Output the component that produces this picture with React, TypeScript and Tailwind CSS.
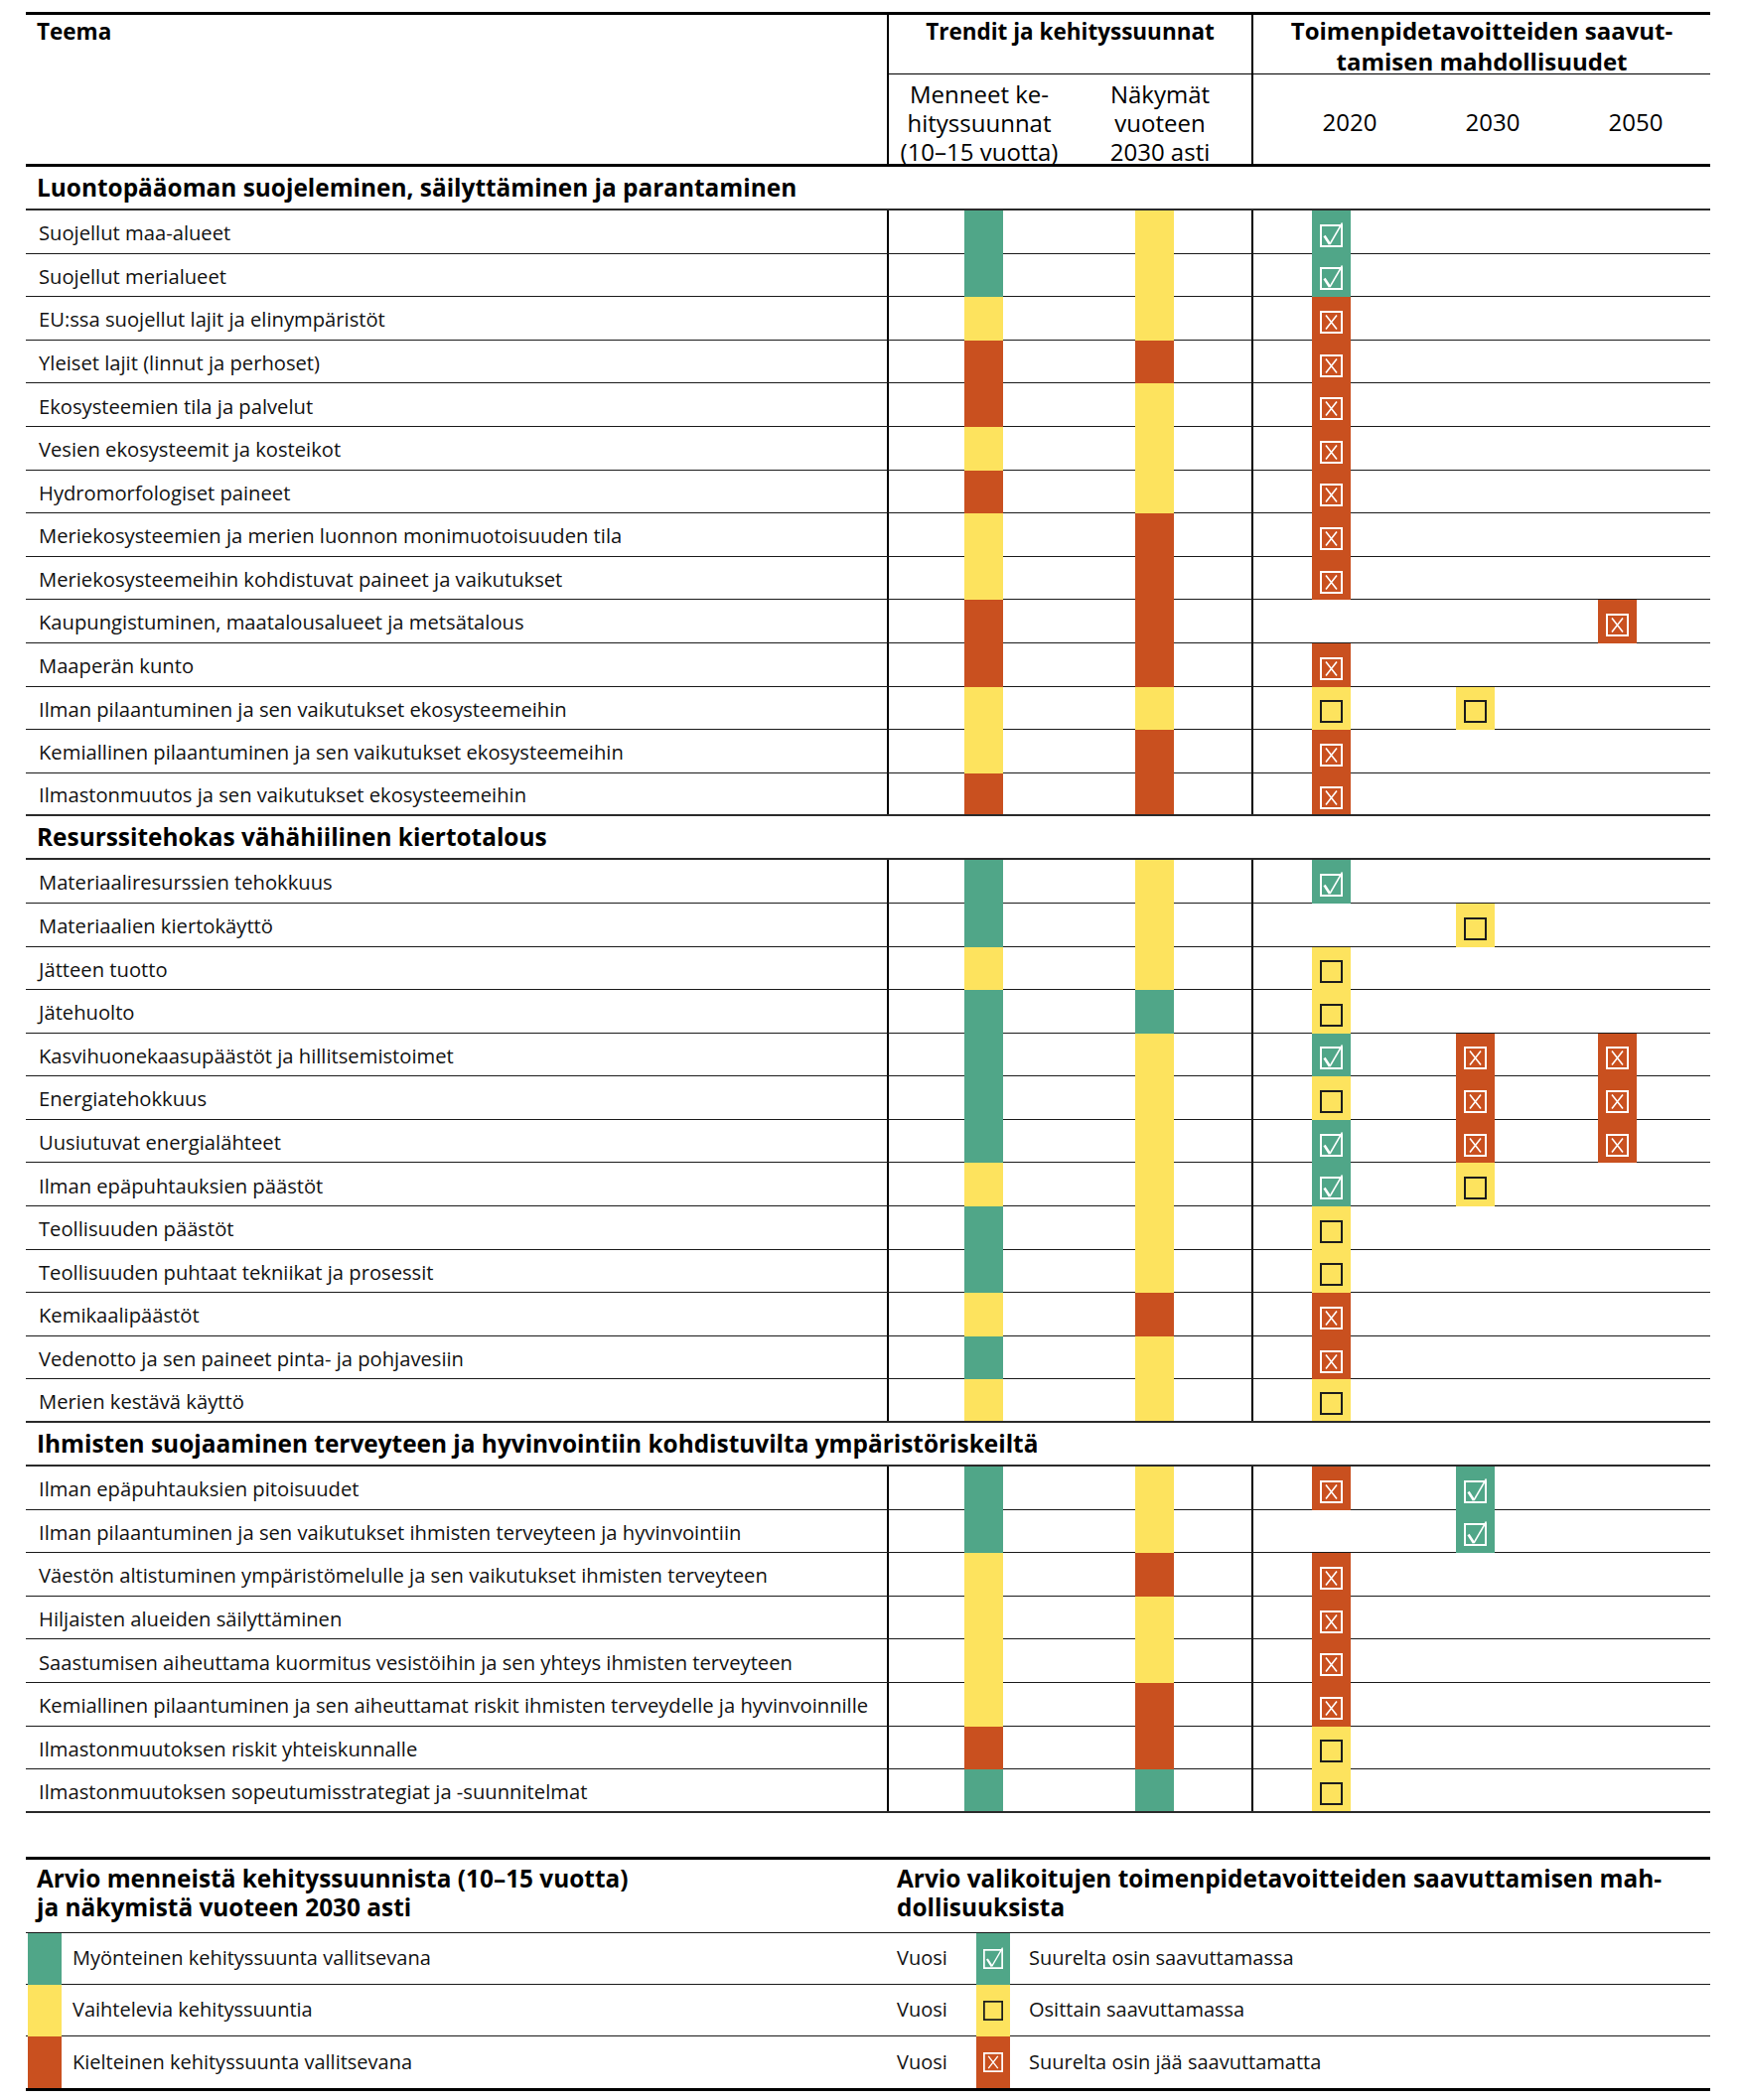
type Trend = 'G' | 'Y' | 'R';
type Goal = 'c' | 'b' | 'x' | '';

interface Theme {
  label: string;
  past: Trend;
  outlook: Trend;
  goals: [Goal, Goal, Goal];
}

interface Section {
  title: string;
  rows: Theme[];
}

const TREND_BG: Record<Trend, string> = {
  G: 'bg-[#50a688]',
  Y: 'bg-[#fde35e]',
  R: 'bg-[#c9501f]',
};

const GOAL_BG: Record<Goal, string> = {
  c: 'bg-[#50a688]',
  b: 'bg-[#fde35e]',
  x: 'bg-[#c9501f]',
  '': '',
};

const t = (label: string, past: Trend, outlook: Trend, a: Goal = '', b: Goal = '', c: Goal = ''): Theme => ({
  label,
  past,
  outlook,
  goals: [a, b, c],
});

const SECTIONS: Section[] = [
  {
    title: 'Luontopääoman suojeleminen, säilyttäminen ja parantaminen',
    rows: [
      t('Suojellut maa-alueet', 'G', 'Y', 'c'),
      t('Suojellut merialueet', 'G', 'Y', 'c'),
      t('EU:ssa suojellut lajit ja elinympäristöt', 'Y', 'Y', 'x'),
      t('Yleiset lajit (linnut ja perhoset)', 'R', 'R', 'x'),
      t('Ekosysteemien tila ja palvelut', 'R', 'Y', 'x'),
      t('Vesien ekosysteemit ja kosteikot', 'Y', 'Y', 'x'),
      t('Hydromorfologiset paineet', 'R', 'Y', 'x'),
      t('Meriekosysteemien ja merien luonnon monimuotoisuuden tila', 'Y', 'R', 'x'),
      t('Meriekosysteemeihin kohdistuvat paineet ja vaikutukset', 'Y', 'R', 'x'),
      t('Kaupungistuminen, maatalousalueet ja metsätalous', 'R', 'R', '', '', 'x'),
      t('Maaperän kunto', 'R', 'R', 'x'),
      t('Ilman pilaantuminen ja sen vaikutukset ekosysteemeihin', 'Y', 'Y', 'b', 'b'),
      t('Kemiallinen pilaantuminen ja sen vaikutukset ekosysteemeihin', 'Y', 'R', 'x'),
      t('Ilmastonmuutos ja sen vaikutukset ekosysteemeihin', 'R', 'R', 'x'),
    ],
  },
  {
    title: 'Resurssitehokas vähähiilinen kiertotalous',
    rows: [
      t('Materiaaliresurssien tehokkuus', 'G', 'Y', 'c'),
      t('Materiaalien kiertokäyttö', 'G', 'Y', '', 'b'),
      t('Jätteen tuotto', 'Y', 'Y', 'b'),
      t('Jätehuolto', 'G', 'G', 'b'),
      t('Kasvihuonekaasupäästöt ja hillitsemistoimet', 'G', 'Y', 'c', 'x', 'x'),
      t('Energiatehokkuus', 'G', 'Y', 'b', 'x', 'x'),
      t('Uusiutuvat energialähteet', 'G', 'Y', 'c', 'x', 'x'),
      t('Ilman epäpuhtauksien päästöt', 'Y', 'Y', 'c', 'b'),
      t('Teollisuuden päästöt', 'G', 'Y', 'b'),
      t('Teollisuuden puhtaat tekniikat ja prosessit', 'G', 'Y', 'b'),
      t('Kemikaalipäästöt', 'Y', 'R', 'x'),
      t('Vedenotto ja sen paineet pinta- ja pohjavesiin', 'G', 'Y', 'x'),
      t('Merien kestävä käyttö', 'Y', 'Y', 'b'),
    ],
  },
  {
    title: 'Ihmisten suojaaminen terveyteen ja hyvinvointiin kohdistuvilta ympäristöriskeiltä',
    rows: [
      t('Ilman epäpuhtauksien pitoisuudet', 'G', 'Y', 'x', 'c'),
      t('Ilman pilaantuminen ja sen vaikutukset ihmisten terveyteen ja hyvinvointiin', 'G', 'Y', '', 'c'),
      t('Väestön altistuminen ympäristömelulle ja sen vaikutukset ihmisten terveyteen', 'Y', 'R', 'x'),
      t('Hiljaisten alueiden säilyttäminen', 'Y', 'Y', 'x'),
      t('Saastumisen aiheuttama kuormitus vesistöihin ja sen yhteys ihmisten terveyteen', 'Y', 'Y', 'x'),
      t('Kemiallinen pilaantuminen ja sen aiheuttamat riskit ihmisten terveydelle ja hyvinvoinnille', 'Y', 'R', 'x'),
      t('Ilmastonmuutoksen riskit yhteiskunnalle', 'R', 'R', 'b'),
      t('Ilmastonmuutoksen sopeutumisstrategiat ja -suunnitelmat', 'G', 'G', 'b'),
    ],
  },
];

function GoalIcon({ kind, size = 23 }: { kind: Goal; size?: number }) {
  if (!kind) return null;
  const stroke = kind === 'b' ? '#1c1c1c' : '#ffffff';
  return (
    <svg width={size} height={size} viewBox="0 0 23 23" className="overflow-visible">
      <rect x="1" y="1" width="21" height="21" fill="none" stroke={stroke} strokeWidth="2" />
      {kind === 'c' && (
        <>
          <path d="M4.5 11.5 L10 20" fill="none" stroke="#fff" strokeWidth="2.6" />
          <path d="M10 20 L22.5 -1.5" fill="none" stroke="#fff" strokeWidth="1.5" />
        </>
      )}
      {kind === 'x' && (
        <path d="M6 4.5 L17 18.5 M17 4.5 L6 18.5" fill="none" stroke="#fff" strokeWidth="1.6" />
      )}
    </svg>
  );
}

function ThemeRow({ row, last }: { row: Theme; last: boolean }) {
  const barH = last ? 'h-full' : 'h-[calc(100%+1px)]';
  const gaps = ['ml-[59px]', 'ml-[106px]', 'ml-[104px]'];
  return (
    <div className={`flex h-[43.6px] ${last ? 'border-b-2 border-[#2a2a2a]' : 'border-b border-[#1a1a1a]'}`}>
      <div className="w-[867px] pl-[13px] pt-[2px] flex items-center text-[20.2px] text-[#111]">{row.label}</div>
      <div className="w-[367px] border-l-2 border-black flex">
        <div className={`ml-[76px] w-[39px] ${barH} ${TREND_BG[row.past]}`} />
        <div className={`ml-[133px] w-[39px] ${barH} ${TREND_BG[row.outlook]}`} />
      </div>
      <div className="w-[462px] border-l-2 border-black flex">
        {row.goals.map((g, i) => (
          <div
            key={i}
            className={`${gaps[i]} w-[39px] ${barH} ${GOAL_BG[g]} flex items-center justify-center pt-[7px]`}
          >
            <GoalIcon kind={g} />
          </div>
        ))}
      </div>
    </div>
  );
}

function LegendRow({
  color,
  text,
  goal,
  goalText,
  last,
}: {
  color: string;
  text: string;
  goal: Goal;
  goalText: string;
  last: boolean;
}) {
  const barH = last ? 'h-full' : 'h-[calc(100%+1px)]';
  return (
    <div className={`flex h-[52px] text-[20px] text-[#111] ${last ? '' : 'border-b border-[#1a1a1a]'}`}>
      <div className="w-[867px] flex items-center">
        <div className={`ml-[2px] w-[34px] self-start ${barH} ${color}`} />
        <span className="ml-[11px]">{text}</span>
      </div>
      <div className="flex-1 flex items-center">
        <span className="pl-[10px] w-[90px]">Vuosi</span>
        <div className={`w-[34px] self-start ${barH} ${color} flex items-center justify-center`}>
          <GoalIcon kind={goal} size={20} />
        </div>
        <span className="ml-[19px]">{goalText}</span>
      </div>
    </div>
  );
}

export default function App() {
  return (
    <div className="w-[1752px] min-h-[2115px] bg-white font-['Open_Sans',sans-serif] text-black">
      <div className="ml-[26px] w-[1696px] pt-[12px]">
        {/* header */}
        <div className="flex border-t-[3px] border-b-[3px] border-black h-[156px]">
          <div className="w-[867px] pl-[11px] pt-[3px] text-[22.5px] leading-[28px] font-bold">Teema</div>
          <div className="w-[367px] border-l-2 border-black flex flex-col">
            <div className="h-[60px] border-b-[1.5px] border-black text-center font-bold text-[22.5px] leading-[28px] pt-[3px]">
              Trendit ja kehityssuunnat
            </div>
            <div className="flex flex-1 text-[24px] leading-[29px] text-center items-end">
              <div className="w-[182px] -mb-[2px]">
                Menneet ke-
                <br />
                hityssuunnat
                <br />
                (10–15 vuotta)
              </div>
              <div className="w-[182px] -mb-[2px]">
                Näkymät
                <br />
                vuoteen
                <br />
                2030 asti
              </div>
            </div>
          </div>
          <div className="w-[462px] border-l-2 border-black flex flex-col">
            <div className="h-[60px] border-b-[1.5px] border-black text-center font-bold text-[24px] leading-[31px]">
              Toimenpidetavoitteiden saavut-
              <br />
              tamisen mahdollisuudet
            </div>
            <div className="flex flex-1 items-center pl-[25px] text-[24px] pt-[6px]">
              <div className="w-[144px] text-center">2020</div>
              <div className="w-[144px] text-center">2030</div>
              <div className="w-[144px] text-center">2050</div>
            </div>
          </div>
        </div>

        {SECTIONS.map((sec) => (
          <div key={sec.title}>
            <div className="h-[44px] border-b-2 border-[#2a2a2a] pl-[11px] flex items-center font-bold text-[24.4px]">
              {sec.title}
            </div>
            {sec.rows.map((row, i) => (
              <ThemeRow key={row.label} row={row} last={i === sec.rows.length - 1} />
            ))}
          </div>
        ))}

        {/* legend */}
        <div className="mt-[44px] border-t-[3px] border-b-[3px] border-black">
          <div className="flex h-[74px] border-b border-[#1a1a1a] font-bold text-[24.4px] leading-[29px]">
            <div className="w-[867px] pl-[11px] pt-[4px]">
              Arvio menneistä kehityssuunnista (10–15 vuotta)
              <br />
              ja näkymistä vuoteen 2030 asti
            </div>
            <div className="flex-1 pl-[10px] pt-[4px]">
              Arvio valikoitujen toimenpidetavoitteiden saavuttamisen mah-
              <br />
              dollisuuksista
            </div>
          </div>
          <LegendRow
            color="bg-[#50a688]"
            text="Myönteinen kehityssuunta vallitsevana"
            goal="c"
            goalText="Suurelta osin saavuttamassa"
            last={false}
          />
          <LegendRow
            color="bg-[#fde35e]"
            text="Vaihtelevia kehityssuuntia"
            goal="b"
            goalText="Osittain saavuttamassa"
            last={false}
          />
          <LegendRow
            color="bg-[#c9501f]"
            text="Kielteinen kehityssuunta vallitsevana"
            goal="x"
            goalText="Suurelta osin jää saavuttamatta"
            last
          />
        </div>
      </div>
    </div>
  );
}
